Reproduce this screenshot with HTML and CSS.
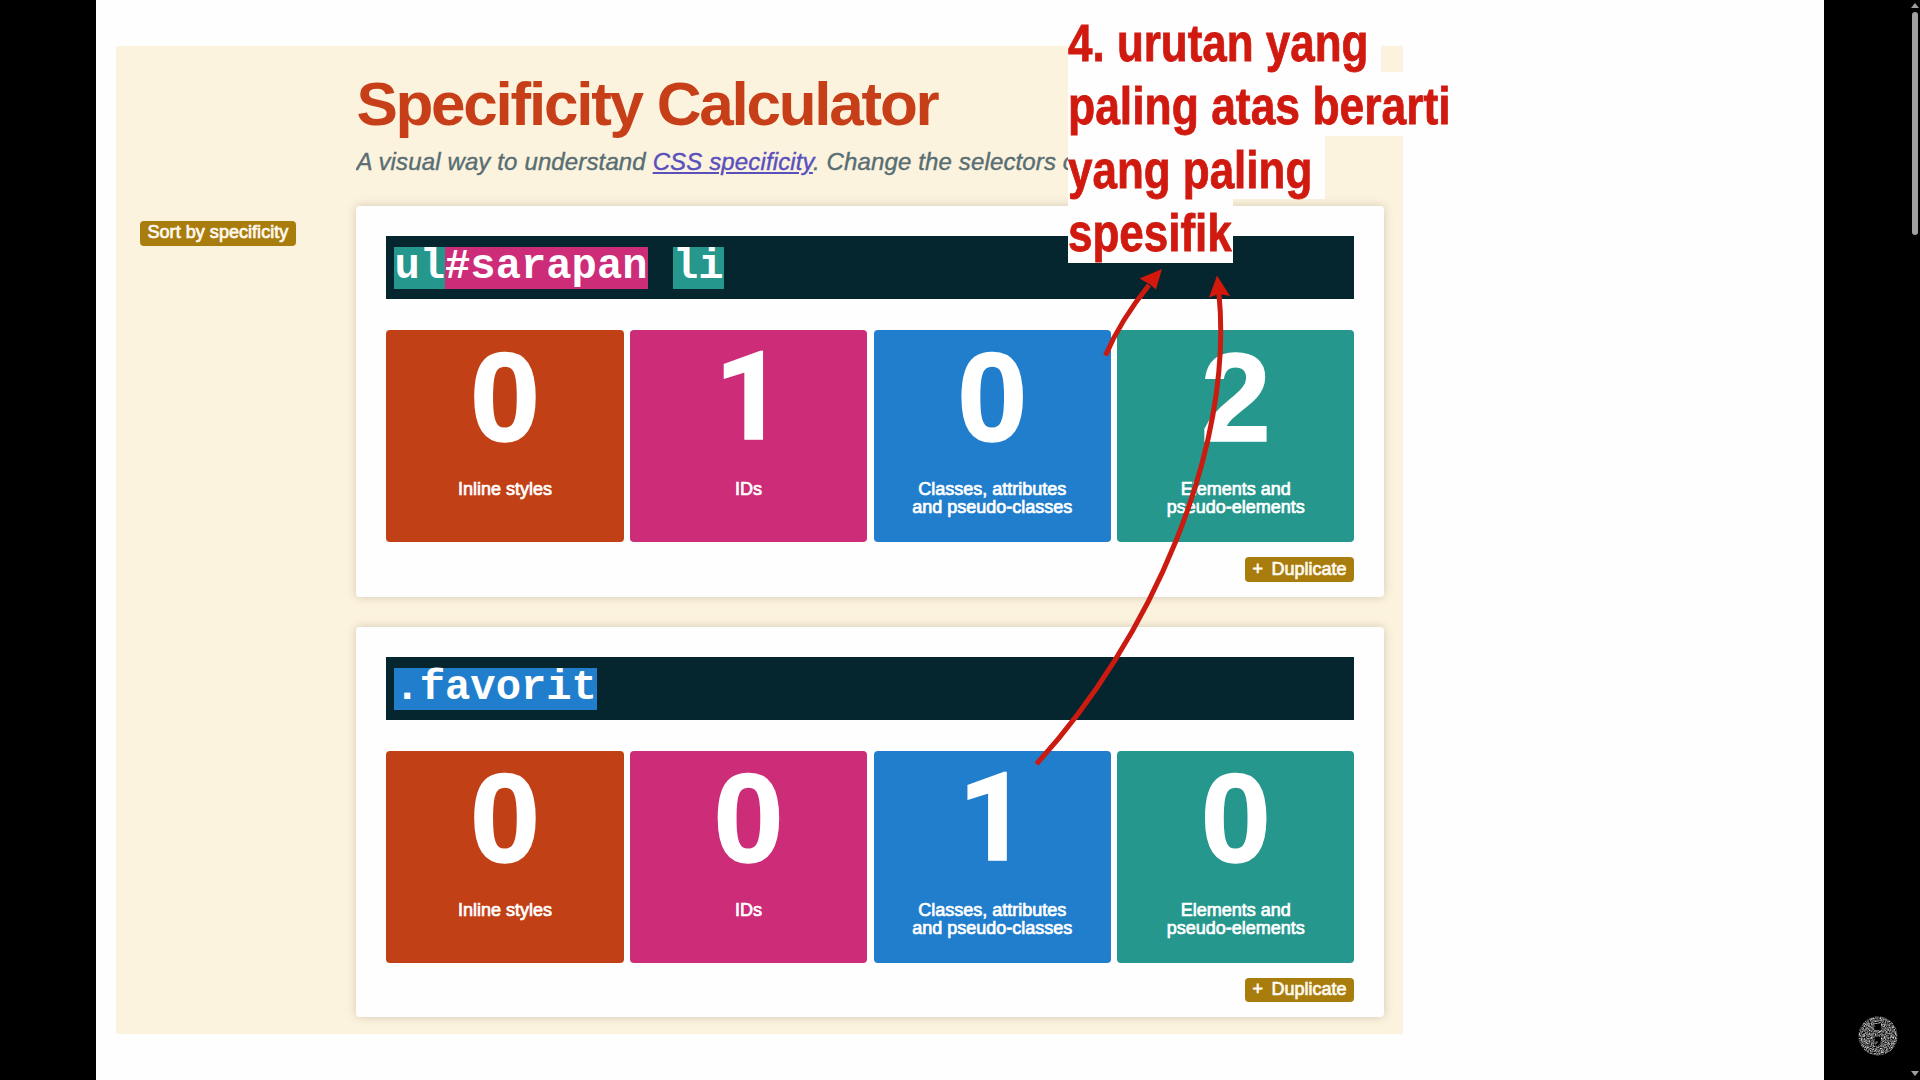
FILE: index.html
```html
<!DOCTYPE html>
<html lang="id">
<head>
<meta charset="utf-8">
<title>Specificity Calculator</title>
<link rel="stylesheet" href="styles.css">
</head>
<body>
<div class="slide">
  <main class="calculator">
    <aside class="sidebar"><span class="button sort"><span>Sort by specificity</span></span></aside>
    <div class="content">
      <h1><span>Specificity Calculator</span></h1>
      <p class="tagline">A visual way to understand <a>CSS specificity</a>. Change the selectors or</p>
      <section class="card">
        <div class="selector"><span class="element">ul</span><span class="id">#sarapan</span> <span class="element">li</span></div>
        <div class="scores">
          <div class="score inline"><b>0</b><span>Inline styles</span></div>
          <div class="score id"><b class="one">1</b><span>IDs</span></div>
          <div class="score class"><b>0</b><span>Classes, attributes<br>and pseudo-classes</span></div>
          <div class="score element"><b>2</b><span>Elements and<br>pseudo-elements</span></div>
        </div>
        <span class="button duplicate"><i>+</i><span>Duplicate</span></span>
      </section>
      <section class="card">
        <div class="selector"><span class="class">.favorit</span></div>
        <div class="scores">
          <div class="score inline"><b>0</b><span>Inline styles</span></div>
          <div class="score id"><b>0</b><span>IDs</span></div>
          <div class="score class"><b class="one">1</b><span>Classes, attributes<br>and pseudo-classes</span></div>
          <div class="score element"><b>0</b><span>Elements and<br>pseudo-elements</span></div>
        </div>
        <span class="button duplicate"><i>+</i><span>Duplicate</span></span>
      </section>
    </div>
  </main>
</div>
<div class="note">
  <div class="n1"><span>4. urutan yang</span></div>
  <div class="n2"><span>paling atas berarti</span></div>
  <div class="n3"><span>yang paling</span></div>
  <div class="n4"><span>spesifik</span></div>
</div>
<svg class="arrows" width="1920" height="1080" viewBox="0 0 1920 1080">
  <g fill="none" stroke="#cb1a10" stroke-width="5">
    <path d="M1105.500 355.500Q1120 321 1149 285"/>
    <path d="M1036.500 764C1150 640 1234 450 1219 294"/>
  </g>
  <g fill="#d3180c">
    <path d="M1162 269L1156 289.500L1150 284.500L1139.500 278.500Z"/>
    <path d="M1217 275.500L1230 296L1219 294L1209 297.500Z"/>
  </g>
</svg>
<svg class="badge" width="40" height="40" viewBox="0 0 40 40">
  <defs>
    <filter id="grain" x="0" y="0" width="1" height="1" color-interpolation-filters="sRGB">
      <feTurbulence type="fractalNoise" baseFrequency="0.8" numOctaves="2" seed="4"/>
      <feColorMatrix values="1.600 0 0 0 -0.430  1.600 0 0 0 -0.430  1.600 0 0 0 -0.430  0 0 0 0 1"/>
      <feComposite in2="SourceGraphic" operator="in"/>
    </filter>
  </defs>
  <circle cx="20" cy="20" r="19.500" fill="#555" filter="url(#grain)"/>
  <path d="M16.500 8h6.500v6h-6.500zM16.500 20.500h6.500v4q0 5-5.500 6v-2q2.500-1 2.500-3h-3.500z" fill="#000"/>
</svg>
<div class="scrollbar"><i class="up"></i><i class="thumb"></i><i class="down"></i></div>
</body>
</html>
```
FILE: styles.css
```css
* { box-sizing: border-box; }
body {
  margin: 0;
  width: 1920px;
  height: 1080px;
  overflow: hidden;
  background: #000;
  font-family: "Liberation Sans", Arial, sans-serif;
}
.slide {
  width: 1728px;
  height: 1080px;
  margin-left: 96px;
  padding: 46px 0 0 20px;
  background: #fefefe;
}
.calculator {
  display: flex;
  width: 1287px;
  height: 988px;
  background: #fcf3df;
}
.sidebar { width: 240.400px; padding: 175px 0 0 24px; }
.content { width: 1028px; }
h1 {
  height: 74px;
  margin: 20px 0 0;
  font-size: 62px;
  line-height: 75px;
  font-weight: bold;
  letter-spacing: -2.250px;
  color: #c63f18;
  white-space: nowrap;
}
.tagline {
  height: 66px;
  margin: 0;
  padding-top: 8px;
  font-size: 24px;
  line-height: 28px;
  letter-spacing: .135px;
  font-style: italic;
  color: #586e72;
  -webkit-text-stroke: .4px currentColor;
  white-space: nowrap;
  overflow: hidden;
}
.tagline a { color: #5a50bd; text-decoration: underline; }
.card {
  display: flex;
  flex-direction: column;
  height: 390.500px;
  margin-bottom: 30px;
  padding: 30px;
  border-radius: 4px;
  background: #fefefe;
  box-shadow: 0 0 10px rgba(90, 70, 40, .25);
}
.selector {
  height: 63px;
  padding: 11px 8px;
  background: #05252f;
  color: #fff;
  font: bold 42.200px/42px "Liberation Mono", "Courier New", monospace;
  white-space: pre;
}
.selector span { display: inline-block; height: 42px; line-height: 41px; vertical-align: top; }
.scores { display: grid; grid-template-columns: repeat(4, 1fr); gap: 6.400px; margin-top: 31px; }
.score {
  height: 212px;
  border-radius: 4px;
  color: #fff;
  text-align: center;
}
.score b { display: block; height: 150px; font-size: 126px; line-height: 135px; -webkit-text-stroke: 1.500px #fff; }
.score .one { padding-left: 2px; font-family: Roboto, sans-serif; font-size: 122px; line-height: 136px; }
.score span { display: block; font-size: 18px; line-height: 18px; -webkit-text-stroke: .7px #fff; }
.inline { background: #c24015; }
.id { background: #cd2c79; }
.class { background: #217ecd; }
.element { background: #25978c; }
.button {
  display: flex;
  align-items: center;
  height: 24.500px;
  padding-bottom: 2px;
  border-radius: 4px;
  background: #a97c0e;
  color: #fffaf0;
  font-size: 18px;
  line-height: 20px;
  -webkit-text-stroke: .7px currentColor;
  white-space: nowrap;
}
.sort { width: 156px; padding-left: 7.500px; letter-spacing: .040px; }
.duplicate { flex-shrink: 0; align-self: flex-end; width: 109px; margin-top: 15px; padding-left: 7px; padding-bottom: 1px; }
.duplicate i { width: 19px; font-style: normal; }
.note {
  position: absolute;
  left: 1067.500px;
  top: 9px;
  color: #d01a10;
  font: bold 51px/69px "Liberation Sans", Arial, sans-serif;
  white-space: nowrap;
}
.note div { height: 63.400px; background: #fefefe; }
.note span { display: inline-block; transform: scaleX(.862); transform-origin: left; -webkit-text-stroke: .8px currentColor; }
.n1 { width: 313.500px; }
.n2 { width: 395px; }
.n3 { width: 257px; }
.n4 { width: 165.500px; }
.note .n2 span { transform: scaleX(.871); }
.arrows { position: absolute; left: 0; top: 0; }
.badge { position: absolute; left: 1857.500px; top: 1015.500px; }
.scrollbar {
  position: absolute;
  right: 1px;
  top: 0;
  width: 8px;
  height: 1080px;
  padding: 3px 0 4px;
  display: flex;
  flex-direction: column;
  align-items: center;
}
.up, .down { border: 4px solid transparent; }
.up { border-top: 0; border-bottom: 5px solid #a0a0a0; }
.down { margin-top: auto; border-bottom: 0; border-top: 5px solid #a0a0a0; }
.thumb { width: 6px; height: 223px; margin-top: 4px; border-radius: 3px; background: #a0a0a0; }
```
